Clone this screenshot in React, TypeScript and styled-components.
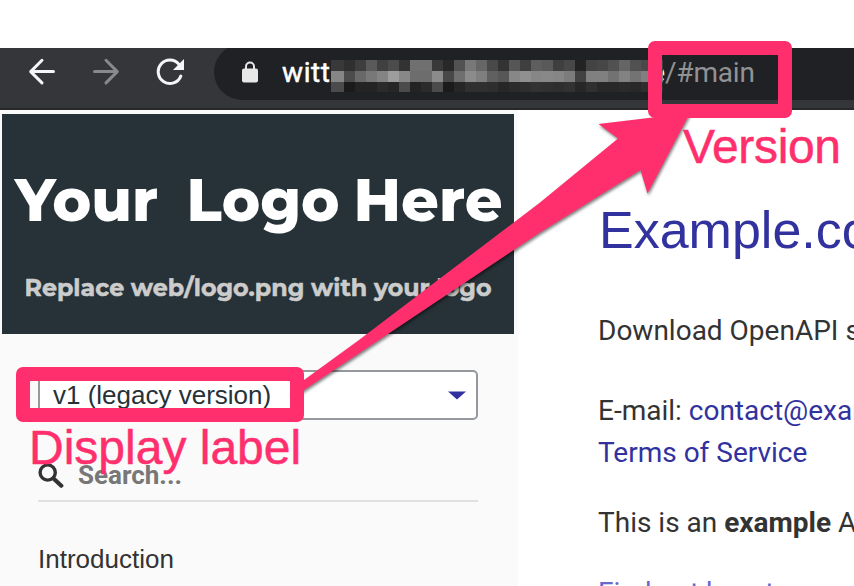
import React from 'react';
import styled, { createGlobalStyle } from 'styled-components';

const PINK = '#ff2f6e';
const INDIGO = '#32329f';

const GlobalStyle = createGlobalStyle`
  html, body { margin: 0; padding: 0; background: #fff; }
  body { overflow: hidden; }
  * { box-sizing: border-box; }
`;

const Page = styled.div`
  position: relative;
  width: 854px;
  height: 586px;
  padding-top: 48px;
  overflow: hidden;
  background: #fff;
  color: #333;
`;

const Toolbar = styled.header`
  display: flex;
  align-items: center;
  height: 62px;
  padding: 0 0 12px 28px;
  border-bottom: 2px solid #282828;
  background: #35363a;
  overflow: hidden;
`;

const NavIcons = styled.nav`
  display: flex;
  flex: none;
  gap: 36px;
  width: 186px;

  svg { flex: none; display: block; }
`;

const AddressBar = styled.div`
  display: flex;
  align-items: center;
  flex: 1;
  height: 56px;
  padding-left: 28px;
  border-radius: 28px 0 0 28px;
  background: #202124;
  font: 500 28px/32px Roboto, sans-serif;
  white-space: pre;
`;

const Host = styled.span`
  width: 49px;
  margin-left: 24px;
  padding-top: 2px;
  color: #fff;
  font-weight: 400;
  letter-spacing: 0.6px;
  -webkit-text-stroke: 0.5px #fff;
`;

const HostEnd = styled.span`
  display: flex;
  justify-content: flex-end;
  width: 2px;
  padding-top: 2px;
  overflow: hidden;
  color: #fff;
`;

const Fragment = styled.span`
  padding-top: 2px;
  color: #919294;
  font-weight: 400;
  letter-spacing: -0.2px;
`;

const Mosaic = styled.div`
  display: grid;
  grid-template-columns: 13px repeat(29, 11px);
  grid-template-rows: 11px 11px 10px;
  width: 332px;
  margin-top: 8px;
`;

const Cell = styled.i<{ $tone: string }>`
  background: ${(p) => '#' + p.$tone + p.$tone + p.$tone};
`;

const Columns = styled.main`
  display: flex;
  height: 476px;
`;

const Sidebar = styled.aside`
  flex: none;
  width: 518px;
  padding: 4px 4px 0 2px;
  background: #fafafa;
`;

const Logo = styled.svg`
  display: block;
  width: 512px;
  height: 220px;
  background: #263238;
`;

const Menu = styled.div`
  display: flex;
  flex-direction: column;
  padding: 36px 36px 0 36px;
`;

const VersionSelect = styled.div`
  display: flex;
  align-items: center;
  justify-content: space-between;
  height: 50px;
  padding: 0 10px 0 13px;
  border: 2px solid #95999d;
  border-radius: 5px;
  background: #fff;
  color: #263238;
  font: 26px/30px 'Liberation Sans', sans-serif;
`;

const SearchBox = styled.div`
  display: flex;
  align-items: flex-end;
  height: 82px;
  padding-bottom: 10px;
  border-bottom: 2px solid #e1e1e1;
  color: #777;
  font: 700 26px/30px Roboto, sans-serif;

  svg { margin: 0 14px 2px 0; }
`;

const MenuItem = styled.div`
  padding-top: 42px;
  font: 26px/30px 'Liberation Sans', sans-serif;
`;

const Content = styled.section`
  flex: none;
  width: 600px;
  padding: 87px 0 0 80px;
  font: 28px/42px Roboto, sans-serif;
  white-space: nowrap;
`;

const Title = styled.h1`
  margin: 0 0 47px;
  padding-left: 1px;
  color: ${INDIGO};
  font: 400 52px/66px 'Liberation Sans', sans-serif;
`;

const Paragraph = styled.p<{ $gap: number }>`
  margin: 0 0 ${(p) => p.$gap}px;
`;

const Link = styled.a<{ $soft?: boolean }>`
  color: ${(p) => (p.$soft ? '#6868cf' : INDIGO)};
`;

const Highlight = styled.div<{ $x: number; $y: number; $w: number; $h: number }>`
  position: absolute;
  left: ${(p) => p.$x}px;
  top: ${(p) => p.$y}px;
  width: ${(p) => p.$w}px;
  height: ${(p) => p.$h}px;
  border: 14px solid ${PINK};
  border-radius: 7px;
`;

const Caption = styled.div<{ $x: number; $y: number; $tracking?: number }>`
  position: absolute;
  left: ${(p) => p.$x}px;
  top: ${(p) => p.$y}px;
  color: ${PINK};
  font: 48px/54px 'Liberation Sans', sans-serif;
  letter-spacing: ${(p) => p.$tracking ?? 0}px;
  -webkit-text-stroke: 0.5px ${PINK};
  white-space: nowrap;
`;

const ArrowLayer = styled.svg`
  position: absolute;
  inset: 0;
  filter: drop-shadow(1px 2px 1.5px rgba(0, 0, 0, 0.5));
`;

const TONES = [
  '39 2f 3e 5a 40 4c 33 70 70 39 28 52 78 66 49 33 56 3f 5e 59 3f 48 23 43 47 51 65 51 49 40',
  '86 4c 69 78 84 9d 88 6d 6d 8b 48 6f 8b 7f 60 57 87 90 86 88 86 7c 42 80 80 72 82 73 80 86',
  '4b 1b 24 24 2b 26 4b 23 2b 4b 1b 26 30 30 2e 27 2b 2e 32 30 2e 32 27 30 28 28 2a 28 2e 30',
];

const BackIcon = () => (
  <svg width="28" height="28" viewBox="0 0 28 28" fill="none" stroke="#f5f6f7" strokeWidth="3" strokeLinecap="round" strokeLinejoin="round">
    <path d="M25.5 13.6H3M14 2.3 2.7 13.6 14 24.9" />
  </svg>
);

const ForwardIcon = () => (
  <svg width="28" height="28" viewBox="0 0 28 28" fill="none" stroke="#88898b" strokeWidth="3" strokeLinecap="round" strokeLinejoin="round">
    <path d="M2.5 13.6H25M14 2.3 25.3 13.6 14 24.9" />
  </svg>
);

const ReloadIcon = () => (
  <svg width="28" height="28" viewBox="0 0 28 28">
    <path d="M24.8 18.1A11.7 11.7 0 1 1 23 6.4" fill="none" stroke="#f5f6f7" strokeWidth="3" strokeLinecap="round" />
    <path d="M28 1v11H17z" fill="#f5f6f7" />
  </svg>
);

const LockIcon = () => (
  <svg width="16" height="22" viewBox="0 0 16 22">
    <path d="M4 9V5.6a4 4 0 0 1 8 0V9" fill="none" stroke="#e8e8e8" strokeWidth="2" />
    <rect y="7.5" width="16" height="14" rx="2" fill="#e8e8e8" />
  </svg>
);

const SearchIcon = () => (
  <svg width="26" height="25" viewBox="0 0 26 25" fill="none" stroke="#333">
    <circle cx="9.7" cy="9.5" r="7.6" strokeWidth="3.4" />
    <path d="M15.5 15.5 23.3 22.7" strokeWidth="4.2" strokeLinecap="round" />
  </svg>
);

export default function App() {
  return (
    <Page>
      <GlobalStyle />
      <Toolbar>
        <NavIcons>
          <BackIcon />
          <ForwardIcon />
          <ReloadIcon />
        </NavIcons>
        <AddressBar>
          <LockIcon />
          <Host>witt</Host>
          <Mosaic>
            {TONES.flatMap((row, r) =>
              row.split(' ').map((tone, c) => <Cell key={`${r}-${c}`} $tone={tone} />),
            )}
          </Mosaic>
          <HostEnd>e</HostEnd>
          <Fragment>/#main</Fragment>
        </AddressBar>
      </Toolbar>
      <Columns>
        <Sidebar>
          <Logo viewBox="0 0 512 220" fontFamily="Montserrat, 'Open Sans', sans-serif">
            <g fill="#fff" fontSize="60" fontWeight="800">
              <text x="13" y="107" textLength="143" lengthAdjust="spacingAndGlyphs">Your</text>
              <text x="184.5" y="107" textLength="153" lengthAdjust="spacingAndGlyphs">Logo</text>
              <text x="351.5" y="107" textLength="149" lengthAdjust="spacingAndGlyphs">Here</text>
            </g>
            <text x="22.5" y="182" fill="#ccc" stroke="#ccc" strokeWidth="0.5" fontSize="24" fontWeight="700" textLength="467" lengthAdjust="spacingAndGlyphs">
              Replace web/logo.png with your logo
            </text>
          </Logo>
          <Menu>
            <VersionSelect>
              v1 (legacy version)
              <svg width="18" height="9" viewBox="0 0 18 9">
                <path d="M0 .5h18L9 8.5z" fill={INDIGO} />
              </svg>
            </VersionSelect>
            <SearchBox>
              <SearchIcon />
              Search...
            </SearchBox>
            <MenuItem>Introduction</MenuItem>
          </Menu>
        </Sidebar>
        <Content>
          <Title>Example.com</Title>
          <Paragraph $gap={38}>Download OpenAPI specification</Paragraph>
          <Paragraph $gap={28}>
            E-mail: <Link>contact@example.com</Link>
            <br />
            <Link>Terms of Service</Link>
          </Paragraph>
          <Paragraph $gap={28}>
            This is an <b>example</b> API
          </Paragraph>
          <Paragraph $gap={0}>
            <Link $soft>Find out how to</Link>
          </Paragraph>
        </Content>
      </Columns>
      <ArrowLayer width="854" height="586" viewBox="0 0 854 586">
        <path
          d="M690 113 598.5 124 618 138.5 540 202.5 359 340 293 388Q288 393 293 398L304 390 379 340 540 232.5 640.5 170 647.5 193.5Z"
          fill={PINK}
        />
      </ArrowLayer>
      <Highlight $x={648} $y={41} $w={144} $h={77} />
      <Highlight $x={16} $y={367} $w={288} $h={55} />
      <Caption $x={683} $y={120} $tracking={-0.35}>Version</Caption>
      <Caption $x={29} $y={421}>Display label</Caption>
    </Page>
  );
}
